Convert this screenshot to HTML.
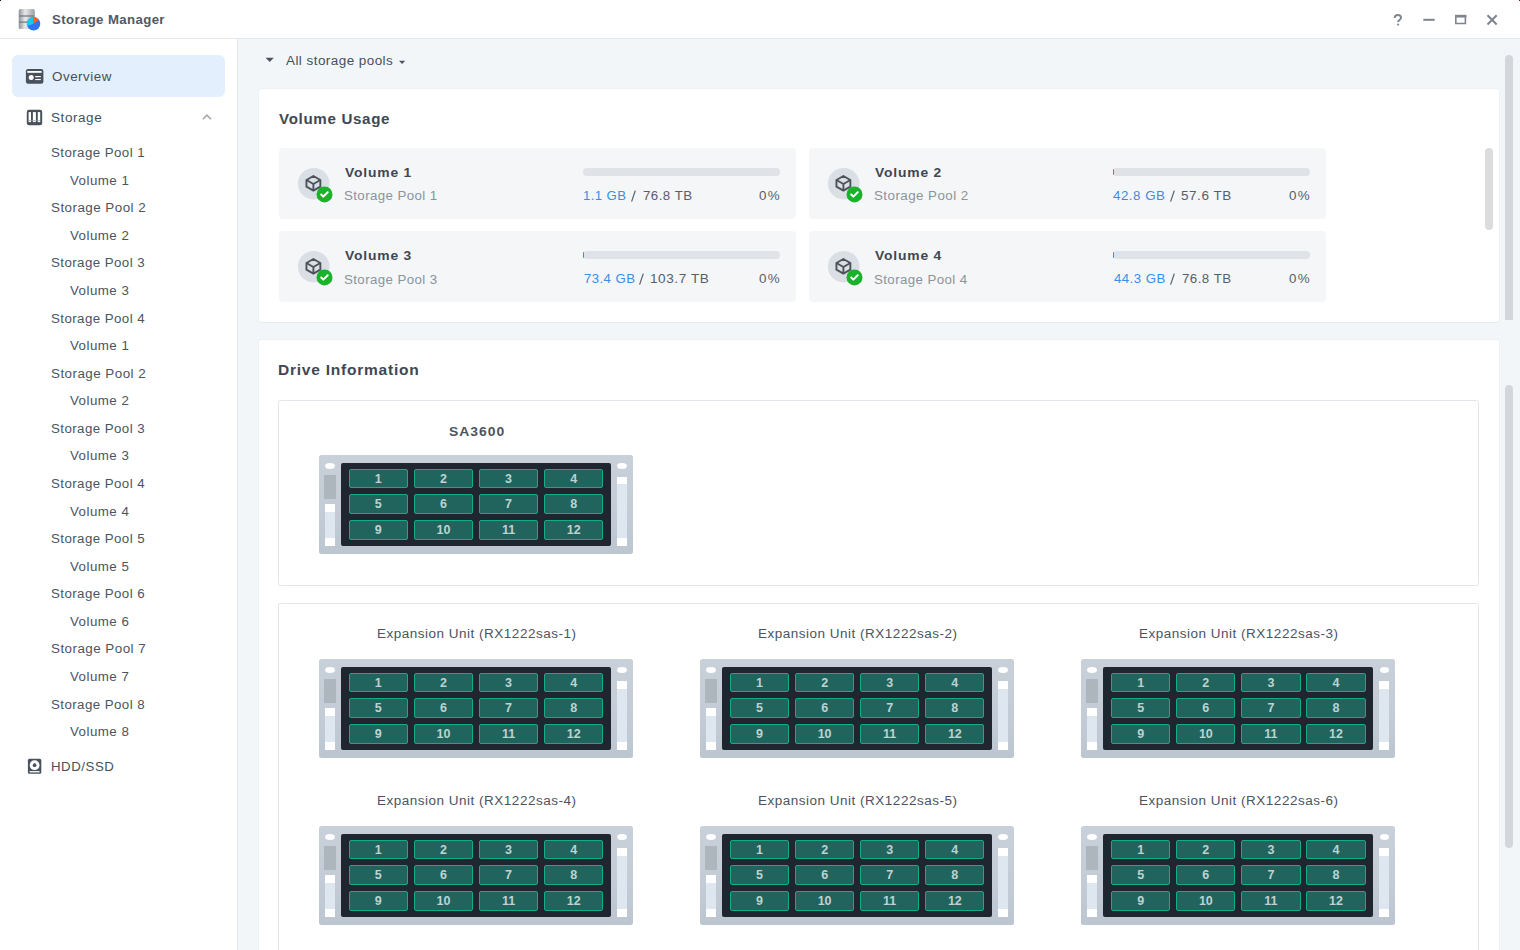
<!DOCTYPE html>
<html><head><meta charset="utf-8"><title>Storage Manager</title><style>
html,body{margin:0;padding:0}
body{width:1520px;height:950px;overflow:hidden;background:#f3f6f9;position:relative;font-family:"Liberation Sans",sans-serif}
.t{position:absolute;white-space:pre;line-height:1;transform-origin:0 0;font-family:"Liberation Sans",sans-serif}
</style></head><body>
<div style="position:absolute;left:0px;top:0px;width:1520px;height:38px;background:#fff"></div>
<div style="position:absolute;left:0px;top:38px;width:1520px;height:1px;background:#e4e8ec"></div>
<div style="position:absolute;left:0px;top:39px;width:237px;height:911px;background:#fff"></div>
<div style="position:absolute;left:237px;top:39px;width:1px;height:911px;background:#e3e7eb"></div>
<div style="position:absolute;left:12px;top:55px;width:213px;height:41.5px;background:#e3effc;border-radius:6px"></div>
<div style="position:absolute;left:0px;top:0px;width:1px;height:1px;background:#0a0a14"></div>
<div style="position:absolute;left:1519px;top:0px;width:1px;height:1px;background:#6a2020"></div>
<svg style="position:absolute;left:1385px;top:8px" width="125" height="24" viewBox="1385 8 125 24">
<g fill="none" stroke="#7d858e" stroke-width="2">
<path d="M1394.7 18.0c0-1.9 1.4-3.0 3.2-3.0s3.1 1.0 3.1 2.7c0 2.2-2.9 2.3-2.9 4.2" stroke-width="1.9"/>
<path d="M1423.3 19.8h11.4"/>
<path d="M1455.8 16.5h9.6v7h-9.6z" stroke-width="1.6"/>
<path d="M1487.5 15.3l9.2 9.2M1496.7 15.3l-9.2 9.2"/>
</g>
<rect x="1455" y="14.8" width="11.4" height="2.6" fill="#7d858e"/>
<circle cx="1398.1" cy="24.6" r="1.05" fill="#7d858e"/>
</svg>
<svg style="position:absolute;left:17px;top:8px" width="26" height="24" viewBox="0 0 26 24">
<defs><linearGradient id="cyl" x1="0" x2="1"><stop offset="0" stop-color="#8e9399"/><stop offset=".4" stop-color="#e8e9eb"/><stop offset="1" stop-color="#9a9fa5"/></linearGradient></defs>
<rect x="1.7" y="1.1" width="16.1" height="6.9" rx="1.6" fill="url(#cyl)"/>
<rect x="1.7" y="8.0" width="16.1" height="6.0" rx="1" fill="url(#cyl)"/>
<rect x="1.7" y="14.0" width="16.1" height="7.0" rx="1.6" fill="url(#cyl)"/>
<rect x="1.7" y="7.4" width="16.1" height="1.2" fill="#6f757b"/>
<rect x="1.7" y="13.5" width="16.1" height="1.2" fill="#6f757b"/>
<circle cx="16.6" cy="15.8" r="6.7" fill="#2f74f4"/>
<path d="M16.6 15.8 L10.3 18.0 A6.7 6.7 0 0 1 16.0 9.1 Z" fill="#16cbe8"/>
<path d="M16.6 15.8 L16.0 9.1 A6.7 6.7 0 0 1 21.9 11.7 Z" fill="#f5671f"/>
</svg>
<svg style="position:absolute;left:24px;top:66px" width="24" height="64" viewBox="24 66 24 64">
<rect x="25.9" y="69" width="17.5" height="14.7" rx="2.2" fill="#48525c"/>
<rect x="27.3" y="71" width="14.3" height="1.8" fill="#fff"/>
<circle cx="31.2" cy="77.4" r="2.5" fill="#fff"/>
<rect x="35.2" y="76" width="5.6" height="1.2" fill="#fff"/>
<rect x="35.2" y="79" width="5.6" height="1.1" fill="#fff"/>
<rect x="26.8" y="109.8" width="15.4" height="15.4" rx="2.2" fill="#48525c"/>
<rect x="28.6" y="112.1" width="2.4" height="10" fill="#fff"/>
<rect x="32.9" y="112.1" width="3.0" height="10" fill="#fff"/>
<rect x="37.8" y="112.1" width="2.4" height="10" fill="#fff"/>
<rect x="28.6" y="120.3" width="11.6" height="0.6" fill="#9aa1a8"/>
</svg>
<svg style="position:absolute;left:24px;top:756px" width="22" height="22" viewBox="24 756 22 22">
<rect x="27.9" y="758.7" width="13.4" height="15" rx="1.5" fill="#48525c"/>
<circle cx="34.6" cy="765.2" r="4.9" fill="#fff"/>
<circle cx="34.6" cy="765.2" r="1.85" fill="#48525c"/>
<rect x="29.6" y="771.1" width="10" height="1.3" fill="#fff"/>
</svg>
<svg style="position:absolute;left:198px;top:110px" width="18" height="14" viewBox="198 110 18 14">
<path d="M202.9 119.2 L206.95 115.1 L211 119.2" fill="none" stroke="#9ea5ad" stroke-width="1.5"/>
</svg>
<svg style="position:absolute;left:262px;top:54px" width="150" height="14" viewBox="262 54 150 14">
<path d="M265.6 57.8h8.2l-4.1 4.1z" fill="#4a535d"/>
<path d="M399.0 60.8h6.2l-3.1 3.1z" fill="#4a535d"/>
</svg>
<div style="position:absolute;left:259px;top:88.5px;width:1240px;height:233.5px;background:#fff;border-radius:2.5px;box-shadow:0 1px 0 #e7ebef,0 0 0 1px #eef1f4"></div>
<div style="position:absolute;left:278.5px;top:148px;width:517px;height:70.5px;background:#f5f6f8;border-radius:4px"></div>
<svg style="position:absolute;left:292.5px;top:162px" width="44" height="44" viewBox="292.5 162 44 44">
<circle cx="313.2" cy="183.7" r="15.8" fill="#dadfe6"/>
<g fill="none" stroke="#4b525a" stroke-width="1.9" stroke-linejoin="round">
<path d="M312.9 175.95 L319.84999999999997 179.95 L319.84999999999997 186.64999999999998 L312.9 190.64999999999998 L305.95 186.64999999999998 L305.95 179.95 Z"/>
<path d="M305.95 179.95 L312.9 183.95 L319.84999999999997 179.95 M312.9 183.95 L312.9 190.64999999999998"/>
</g>
<circle cx="324.0" cy="194.39999999999998" r="8.0" fill="#19b22a"/>
<path d="M320.7 194.5 L322.8 196.6 L327.2 192.2" fill="none" stroke="#fff" stroke-width="2.0" stroke-linecap="round" stroke-linejoin="round"/>
</svg>
<div style="position:absolute;left:583.0px;top:168px;width:197px;height:7.5px;background:#dfe2e6;border-radius:4px"></div>
<svg style="position:absolute;left:629.7px;top:189px" width="8" height="14" viewBox="0 0 8 14"><path d="M5.3 1.6 L1.6 12.6" stroke="#5a636c" stroke-width="1.25" fill="none"/></svg>
<div style="position:absolute;left:808.6px;top:148px;width:517px;height:70.5px;background:#f5f6f8;border-radius:4px"></div>
<svg style="position:absolute;left:822.6px;top:162px" width="44" height="44" viewBox="822.6 162 44 44">
<circle cx="843.3000000000001" cy="183.7" r="15.8" fill="#dadfe6"/>
<g fill="none" stroke="#4b525a" stroke-width="1.9" stroke-linejoin="round">
<path d="M843.0000000000001 175.95 L849.95 179.95 L849.95 186.64999999999998 L843.0000000000001 190.64999999999998 L836.0500000000001 186.64999999999998 L836.0500000000001 179.95 Z"/>
<path d="M836.0500000000001 179.95 L843.0000000000001 183.95 L849.95 179.95 M843.0000000000001 183.95 L843.0000000000001 190.64999999999998"/>
</g>
<circle cx="854.1" cy="194.39999999999998" r="8.0" fill="#19b22a"/>
<path d="M850.8000000000001 194.5 L852.9000000000001 196.6 L857.3000000000001 192.2" fill="none" stroke="#fff" stroke-width="2.0" stroke-linecap="round" stroke-linejoin="round"/>
</svg>
<div style="position:absolute;left:1113.1px;top:168px;width:197px;height:7.5px;background:#dfe2e6;border-radius:4px"></div>
<div style="position:absolute;left:1112.9px;top:168.6px;width:1.5px;height:6.3px;background:#3a8ae8;border-radius:1px 0 0 1px"></div>
<svg style="position:absolute;left:1168.5px;top:189px" width="8" height="14" viewBox="0 0 8 14"><path d="M5.3 1.6 L1.6 12.6" stroke="#5a636c" stroke-width="1.25" fill="none"/></svg>
<div style="position:absolute;left:278.5px;top:231.4px;width:517px;height:70.5px;background:#f5f6f8;border-radius:4px"></div>
<svg style="position:absolute;left:292.5px;top:245.4px" width="44" height="44" viewBox="292.5 245.4 44 44">
<circle cx="313.2" cy="267.1" r="15.8" fill="#dadfe6"/>
<g fill="none" stroke="#4b525a" stroke-width="1.9" stroke-linejoin="round">
<path d="M312.9 259.35 L319.84999999999997 263.35 L319.84999999999997 270.05 L312.9 274.05 L305.95 270.05 L305.95 263.35 Z"/>
<path d="M305.95 263.35 L312.9 267.35 L319.84999999999997 263.35 M312.9 267.35 L312.9 274.05"/>
</g>
<circle cx="324.0" cy="277.8" r="8.0" fill="#19b22a"/>
<path d="M320.7 277.90000000000003 L322.8 280.0 L327.2 275.6" fill="none" stroke="#fff" stroke-width="2.0" stroke-linecap="round" stroke-linejoin="round"/>
</svg>
<div style="position:absolute;left:583.0px;top:251.4px;width:197px;height:7.5px;background:#dfe2e6;border-radius:4px"></div>
<div style="position:absolute;left:582.8px;top:252.0px;width:1.5px;height:6.3px;background:#3a8ae8;border-radius:1px 0 0 1px"></div>
<svg style="position:absolute;left:638.4px;top:272.4px" width="8" height="14" viewBox="0 0 8 14"><path d="M5.3 1.6 L1.6 12.6" stroke="#5a636c" stroke-width="1.25" fill="none"/></svg>
<div style="position:absolute;left:808.6px;top:231.4px;width:517px;height:70.5px;background:#f5f6f8;border-radius:4px"></div>
<svg style="position:absolute;left:822.6px;top:245.4px" width="44" height="44" viewBox="822.6 245.4 44 44">
<circle cx="843.3000000000001" cy="267.1" r="15.8" fill="#dadfe6"/>
<g fill="none" stroke="#4b525a" stroke-width="1.9" stroke-linejoin="round">
<path d="M843.0000000000001 259.35 L849.95 263.35 L849.95 270.05 L843.0000000000001 274.05 L836.0500000000001 270.05 L836.0500000000001 263.35 Z"/>
<path d="M836.0500000000001 263.35 L843.0000000000001 267.35 L849.95 263.35 M843.0000000000001 267.35 L843.0000000000001 274.05"/>
</g>
<circle cx="854.1" cy="277.8" r="8.0" fill="#19b22a"/>
<path d="M850.8000000000001 277.90000000000003 L852.9000000000001 280.0 L857.3000000000001 275.6" fill="none" stroke="#fff" stroke-width="2.0" stroke-linecap="round" stroke-linejoin="round"/>
</svg>
<div style="position:absolute;left:1113.1px;top:251.4px;width:197px;height:7.5px;background:#dfe2e6;border-radius:4px"></div>
<div style="position:absolute;left:1112.9px;top:252.0px;width:1.5px;height:6.3px;background:#3a8ae8;border-radius:1px 0 0 1px"></div>
<svg style="position:absolute;left:1169.1px;top:272.4px" width="8" height="14" viewBox="0 0 8 14"><path d="M5.3 1.6 L1.6 12.6" stroke="#5a636c" stroke-width="1.25" fill="none"/></svg>
<div style="position:absolute;left:1485.2px;top:148.3px;width:8.2px;height:82px;background:#dcdcdc;border-radius:4px"></div>
<div style="position:absolute;left:259px;top:339.5px;width:1240px;height:620px;background:#fff;border-radius:2.5px;box-shadow:0 1px 0 #e7ebef,0 0 0 1px #eef1f4"></div>
<div style="position:absolute;left:278.3px;top:399.5px;width:1200.7px;height:186.7px;border:1px solid #e2e6eb;border-radius:2.5px;box-sizing:border-box"></div>
<div style="position:absolute;left:278.3px;top:602.7px;width:1200.7px;height:400px;border:1px solid #e2e6eb;border-radius:2.5px;box-sizing:border-box"></div>
<div style="position:absolute;left:319px;top:455px;width:314px;height:98.5px;background:linear-gradient(#c8d0d9,#c3ccd6 60%,#bcc6d0);border-radius:2.5px"><div style="position:absolute;left:5.7px;top:8px;width:10.1px;height:6px;background:#fff;border-radius:50%"></div><div style="position:absolute;left:5.1px;top:20px;width:11.6px;height:23.6px;background:#adb5bd"></div><div style="position:absolute;left:5.8px;top:49.4px;width:10.1px;height:41.7px;background:linear-gradient(#fff 0,#fff 8.1px,#dee7f0 8.1px,#dee7f0 33.6px,#fff 33.6px)"></div><div style="position:absolute;left:298.2px;top:8.3px;width:9.6px;height:5.8px;background:#fff;border-radius:50%"></div><div style="position:absolute;left:298.1px;top:22.2px;width:9.8px;height:68.9px;background:linear-gradient(#fff 0,#fff 7.5px,#dee7f0 7.5px,#dee7f0 60.8px,#fff 60.8px)"></div><div style="position:absolute;left:21.8px;top:8px;width:270px;height:82.7px;background:#1f2630;border-radius:2px"></div><div style="position:absolute;left:29.6px;top:13.6px;width:59.3px;height:19.8px;box-sizing:border-box;border:1.3px solid #12ad87;border-radius:2px;background:#21645e;color:#bdd3cf;font:700 12.5px/18.6px 'Liberation Sans',sans-serif;text-align:center">1</div><div style="position:absolute;left:94.8px;top:13.6px;width:59.3px;height:19.8px;box-sizing:border-box;border:1.3px solid #12ad87;border-radius:2px;background:#21645e;color:#bdd3cf;font:700 12.5px/18.6px 'Liberation Sans',sans-serif;text-align:center">2</div><div style="position:absolute;left:159.9px;top:13.6px;width:59.3px;height:19.8px;box-sizing:border-box;border:1.3px solid #12ad87;border-radius:2px;background:#21645e;color:#bdd3cf;font:700 12.5px/18.6px 'Liberation Sans',sans-serif;text-align:center">3</div><div style="position:absolute;left:225.0px;top:13.6px;width:59.3px;height:19.8px;box-sizing:border-box;border:1.3px solid #12ad87;border-radius:2px;background:#21645e;color:#bdd3cf;font:700 12.5px/18.6px 'Liberation Sans',sans-serif;text-align:center">4</div><div style="position:absolute;left:29.6px;top:39.4px;width:59.3px;height:19.8px;box-sizing:border-box;border:1.3px solid #12ad87;border-radius:2px;background:#21645e;color:#bdd3cf;font:700 12.5px/18.6px 'Liberation Sans',sans-serif;text-align:center">5</div><div style="position:absolute;left:94.8px;top:39.4px;width:59.3px;height:19.8px;box-sizing:border-box;border:1.3px solid #12ad87;border-radius:2px;background:#21645e;color:#bdd3cf;font:700 12.5px/18.6px 'Liberation Sans',sans-serif;text-align:center">6</div><div style="position:absolute;left:159.9px;top:39.4px;width:59.3px;height:19.8px;box-sizing:border-box;border:1.3px solid #12ad87;border-radius:2px;background:#21645e;color:#bdd3cf;font:700 12.5px/18.6px 'Liberation Sans',sans-serif;text-align:center">7</div><div style="position:absolute;left:225.0px;top:39.4px;width:59.3px;height:19.8px;box-sizing:border-box;border:1.3px solid #12ad87;border-radius:2px;background:#21645e;color:#bdd3cf;font:700 12.5px/18.6px 'Liberation Sans',sans-serif;text-align:center">8</div><div style="position:absolute;left:29.6px;top:65.0px;width:59.3px;height:19.8px;box-sizing:border-box;border:1.3px solid #12ad87;border-radius:2px;background:#21645e;color:#bdd3cf;font:700 12.5px/18.6px 'Liberation Sans',sans-serif;text-align:center">9</div><div style="position:absolute;left:94.8px;top:65.0px;width:59.3px;height:19.8px;box-sizing:border-box;border:1.3px solid #12ad87;border-radius:2px;background:#21645e;color:#bdd3cf;font:700 12.5px/18.6px 'Liberation Sans',sans-serif;text-align:center">10</div><div style="position:absolute;left:159.9px;top:65.0px;width:59.3px;height:19.8px;box-sizing:border-box;border:1.3px solid #12ad87;border-radius:2px;background:#21645e;color:#bdd3cf;font:700 12.5px/18.6px 'Liberation Sans',sans-serif;text-align:center">11</div><div style="position:absolute;left:225.0px;top:65.0px;width:59.3px;height:19.8px;box-sizing:border-box;border:1.3px solid #12ad87;border-radius:2px;background:#21645e;color:#bdd3cf;font:700 12.5px/18.6px 'Liberation Sans',sans-serif;text-align:center">12</div></div>
<div style="position:absolute;left:319.0px;top:659px;width:314px;height:98.5px;background:linear-gradient(#c8d0d9,#c3ccd6 60%,#bcc6d0);border-radius:2.5px"><div style="position:absolute;left:5.7px;top:8px;width:10.1px;height:6px;background:#fff;border-radius:50%"></div><div style="position:absolute;left:5.1px;top:20px;width:11.6px;height:23.6px;background:#adb5bd"></div><div style="position:absolute;left:5.8px;top:49.4px;width:10.1px;height:41.7px;background:linear-gradient(#fff 0,#fff 8.1px,#dee7f0 8.1px,#dee7f0 33.6px,#fff 33.6px)"></div><div style="position:absolute;left:298.2px;top:8.3px;width:9.6px;height:5.8px;background:#fff;border-radius:50%"></div><div style="position:absolute;left:298.1px;top:22.2px;width:9.8px;height:68.9px;background:linear-gradient(#fff 0,#fff 7.5px,#dee7f0 7.5px,#dee7f0 60.8px,#fff 60.8px)"></div><div style="position:absolute;left:21.8px;top:8px;width:270px;height:82.7px;background:#1f2630;border-radius:2px"></div><div style="position:absolute;left:29.6px;top:13.6px;width:59.3px;height:19.8px;box-sizing:border-box;border:1.3px solid #12ad87;border-radius:2px;background:#21645e;color:#bdd3cf;font:700 12.5px/18.6px 'Liberation Sans',sans-serif;text-align:center">1</div><div style="position:absolute;left:94.8px;top:13.6px;width:59.3px;height:19.8px;box-sizing:border-box;border:1.3px solid #12ad87;border-radius:2px;background:#21645e;color:#bdd3cf;font:700 12.5px/18.6px 'Liberation Sans',sans-serif;text-align:center">2</div><div style="position:absolute;left:159.9px;top:13.6px;width:59.3px;height:19.8px;box-sizing:border-box;border:1.3px solid #12ad87;border-radius:2px;background:#21645e;color:#bdd3cf;font:700 12.5px/18.6px 'Liberation Sans',sans-serif;text-align:center">3</div><div style="position:absolute;left:225.0px;top:13.6px;width:59.3px;height:19.8px;box-sizing:border-box;border:1.3px solid #12ad87;border-radius:2px;background:#21645e;color:#bdd3cf;font:700 12.5px/18.6px 'Liberation Sans',sans-serif;text-align:center">4</div><div style="position:absolute;left:29.6px;top:39.4px;width:59.3px;height:19.8px;box-sizing:border-box;border:1.3px solid #12ad87;border-radius:2px;background:#21645e;color:#bdd3cf;font:700 12.5px/18.6px 'Liberation Sans',sans-serif;text-align:center">5</div><div style="position:absolute;left:94.8px;top:39.4px;width:59.3px;height:19.8px;box-sizing:border-box;border:1.3px solid #12ad87;border-radius:2px;background:#21645e;color:#bdd3cf;font:700 12.5px/18.6px 'Liberation Sans',sans-serif;text-align:center">6</div><div style="position:absolute;left:159.9px;top:39.4px;width:59.3px;height:19.8px;box-sizing:border-box;border:1.3px solid #12ad87;border-radius:2px;background:#21645e;color:#bdd3cf;font:700 12.5px/18.6px 'Liberation Sans',sans-serif;text-align:center">7</div><div style="position:absolute;left:225.0px;top:39.4px;width:59.3px;height:19.8px;box-sizing:border-box;border:1.3px solid #12ad87;border-radius:2px;background:#21645e;color:#bdd3cf;font:700 12.5px/18.6px 'Liberation Sans',sans-serif;text-align:center">8</div><div style="position:absolute;left:29.6px;top:65.0px;width:59.3px;height:19.8px;box-sizing:border-box;border:1.3px solid #12ad87;border-radius:2px;background:#21645e;color:#bdd3cf;font:700 12.5px/18.6px 'Liberation Sans',sans-serif;text-align:center">9</div><div style="position:absolute;left:94.8px;top:65.0px;width:59.3px;height:19.8px;box-sizing:border-box;border:1.3px solid #12ad87;border-radius:2px;background:#21645e;color:#bdd3cf;font:700 12.5px/18.6px 'Liberation Sans',sans-serif;text-align:center">10</div><div style="position:absolute;left:159.9px;top:65.0px;width:59.3px;height:19.8px;box-sizing:border-box;border:1.3px solid #12ad87;border-radius:2px;background:#21645e;color:#bdd3cf;font:700 12.5px/18.6px 'Liberation Sans',sans-serif;text-align:center">11</div><div style="position:absolute;left:225.0px;top:65.0px;width:59.3px;height:19.8px;box-sizing:border-box;border:1.3px solid #12ad87;border-radius:2px;background:#21645e;color:#bdd3cf;font:700 12.5px/18.6px 'Liberation Sans',sans-serif;text-align:center">12</div></div>
<div style="position:absolute;left:700.2px;top:659px;width:314px;height:98.5px;background:linear-gradient(#c8d0d9,#c3ccd6 60%,#bcc6d0);border-radius:2.5px"><div style="position:absolute;left:5.7px;top:8px;width:10.1px;height:6px;background:#fff;border-radius:50%"></div><div style="position:absolute;left:5.1px;top:20px;width:11.6px;height:23.6px;background:#adb5bd"></div><div style="position:absolute;left:5.8px;top:49.4px;width:10.1px;height:41.7px;background:linear-gradient(#fff 0,#fff 8.1px,#dee7f0 8.1px,#dee7f0 33.6px,#fff 33.6px)"></div><div style="position:absolute;left:298.2px;top:8.3px;width:9.6px;height:5.8px;background:#fff;border-radius:50%"></div><div style="position:absolute;left:298.1px;top:22.2px;width:9.8px;height:68.9px;background:linear-gradient(#fff 0,#fff 7.5px,#dee7f0 7.5px,#dee7f0 60.8px,#fff 60.8px)"></div><div style="position:absolute;left:21.8px;top:8px;width:270px;height:82.7px;background:#1f2630;border-radius:2px"></div><div style="position:absolute;left:29.6px;top:13.6px;width:59.3px;height:19.8px;box-sizing:border-box;border:1.3px solid #12ad87;border-radius:2px;background:#21645e;color:#bdd3cf;font:700 12.5px/18.6px 'Liberation Sans',sans-serif;text-align:center">1</div><div style="position:absolute;left:94.8px;top:13.6px;width:59.3px;height:19.8px;box-sizing:border-box;border:1.3px solid #12ad87;border-radius:2px;background:#21645e;color:#bdd3cf;font:700 12.5px/18.6px 'Liberation Sans',sans-serif;text-align:center">2</div><div style="position:absolute;left:159.9px;top:13.6px;width:59.3px;height:19.8px;box-sizing:border-box;border:1.3px solid #12ad87;border-radius:2px;background:#21645e;color:#bdd3cf;font:700 12.5px/18.6px 'Liberation Sans',sans-serif;text-align:center">3</div><div style="position:absolute;left:225.0px;top:13.6px;width:59.3px;height:19.8px;box-sizing:border-box;border:1.3px solid #12ad87;border-radius:2px;background:#21645e;color:#bdd3cf;font:700 12.5px/18.6px 'Liberation Sans',sans-serif;text-align:center">4</div><div style="position:absolute;left:29.6px;top:39.4px;width:59.3px;height:19.8px;box-sizing:border-box;border:1.3px solid #12ad87;border-radius:2px;background:#21645e;color:#bdd3cf;font:700 12.5px/18.6px 'Liberation Sans',sans-serif;text-align:center">5</div><div style="position:absolute;left:94.8px;top:39.4px;width:59.3px;height:19.8px;box-sizing:border-box;border:1.3px solid #12ad87;border-radius:2px;background:#21645e;color:#bdd3cf;font:700 12.5px/18.6px 'Liberation Sans',sans-serif;text-align:center">6</div><div style="position:absolute;left:159.9px;top:39.4px;width:59.3px;height:19.8px;box-sizing:border-box;border:1.3px solid #12ad87;border-radius:2px;background:#21645e;color:#bdd3cf;font:700 12.5px/18.6px 'Liberation Sans',sans-serif;text-align:center">7</div><div style="position:absolute;left:225.0px;top:39.4px;width:59.3px;height:19.8px;box-sizing:border-box;border:1.3px solid #12ad87;border-radius:2px;background:#21645e;color:#bdd3cf;font:700 12.5px/18.6px 'Liberation Sans',sans-serif;text-align:center">8</div><div style="position:absolute;left:29.6px;top:65.0px;width:59.3px;height:19.8px;box-sizing:border-box;border:1.3px solid #12ad87;border-radius:2px;background:#21645e;color:#bdd3cf;font:700 12.5px/18.6px 'Liberation Sans',sans-serif;text-align:center">9</div><div style="position:absolute;left:94.8px;top:65.0px;width:59.3px;height:19.8px;box-sizing:border-box;border:1.3px solid #12ad87;border-radius:2px;background:#21645e;color:#bdd3cf;font:700 12.5px/18.6px 'Liberation Sans',sans-serif;text-align:center">10</div><div style="position:absolute;left:159.9px;top:65.0px;width:59.3px;height:19.8px;box-sizing:border-box;border:1.3px solid #12ad87;border-radius:2px;background:#21645e;color:#bdd3cf;font:700 12.5px/18.6px 'Liberation Sans',sans-serif;text-align:center">11</div><div style="position:absolute;left:225.0px;top:65.0px;width:59.3px;height:19.8px;box-sizing:border-box;border:1.3px solid #12ad87;border-radius:2px;background:#21645e;color:#bdd3cf;font:700 12.5px/18.6px 'Liberation Sans',sans-serif;text-align:center">12</div></div>
<div style="position:absolute;left:1081.4px;top:659px;width:314px;height:98.5px;background:linear-gradient(#c8d0d9,#c3ccd6 60%,#bcc6d0);border-radius:2.5px"><div style="position:absolute;left:5.7px;top:8px;width:10.1px;height:6px;background:#fff;border-radius:50%"></div><div style="position:absolute;left:5.1px;top:20px;width:11.6px;height:23.6px;background:#adb5bd"></div><div style="position:absolute;left:5.8px;top:49.4px;width:10.1px;height:41.7px;background:linear-gradient(#fff 0,#fff 8.1px,#dee7f0 8.1px,#dee7f0 33.6px,#fff 33.6px)"></div><div style="position:absolute;left:298.2px;top:8.3px;width:9.6px;height:5.8px;background:#fff;border-radius:50%"></div><div style="position:absolute;left:298.1px;top:22.2px;width:9.8px;height:68.9px;background:linear-gradient(#fff 0,#fff 7.5px,#dee7f0 7.5px,#dee7f0 60.8px,#fff 60.8px)"></div><div style="position:absolute;left:21.8px;top:8px;width:270px;height:82.7px;background:#1f2630;border-radius:2px"></div><div style="position:absolute;left:29.6px;top:13.6px;width:59.3px;height:19.8px;box-sizing:border-box;border:1.3px solid #12ad87;border-radius:2px;background:#21645e;color:#bdd3cf;font:700 12.5px/18.6px 'Liberation Sans',sans-serif;text-align:center">1</div><div style="position:absolute;left:94.8px;top:13.6px;width:59.3px;height:19.8px;box-sizing:border-box;border:1.3px solid #12ad87;border-radius:2px;background:#21645e;color:#bdd3cf;font:700 12.5px/18.6px 'Liberation Sans',sans-serif;text-align:center">2</div><div style="position:absolute;left:159.9px;top:13.6px;width:59.3px;height:19.8px;box-sizing:border-box;border:1.3px solid #12ad87;border-radius:2px;background:#21645e;color:#bdd3cf;font:700 12.5px/18.6px 'Liberation Sans',sans-serif;text-align:center">3</div><div style="position:absolute;left:225.0px;top:13.6px;width:59.3px;height:19.8px;box-sizing:border-box;border:1.3px solid #12ad87;border-radius:2px;background:#21645e;color:#bdd3cf;font:700 12.5px/18.6px 'Liberation Sans',sans-serif;text-align:center">4</div><div style="position:absolute;left:29.6px;top:39.4px;width:59.3px;height:19.8px;box-sizing:border-box;border:1.3px solid #12ad87;border-radius:2px;background:#21645e;color:#bdd3cf;font:700 12.5px/18.6px 'Liberation Sans',sans-serif;text-align:center">5</div><div style="position:absolute;left:94.8px;top:39.4px;width:59.3px;height:19.8px;box-sizing:border-box;border:1.3px solid #12ad87;border-radius:2px;background:#21645e;color:#bdd3cf;font:700 12.5px/18.6px 'Liberation Sans',sans-serif;text-align:center">6</div><div style="position:absolute;left:159.9px;top:39.4px;width:59.3px;height:19.8px;box-sizing:border-box;border:1.3px solid #12ad87;border-radius:2px;background:#21645e;color:#bdd3cf;font:700 12.5px/18.6px 'Liberation Sans',sans-serif;text-align:center">7</div><div style="position:absolute;left:225.0px;top:39.4px;width:59.3px;height:19.8px;box-sizing:border-box;border:1.3px solid #12ad87;border-radius:2px;background:#21645e;color:#bdd3cf;font:700 12.5px/18.6px 'Liberation Sans',sans-serif;text-align:center">8</div><div style="position:absolute;left:29.6px;top:65.0px;width:59.3px;height:19.8px;box-sizing:border-box;border:1.3px solid #12ad87;border-radius:2px;background:#21645e;color:#bdd3cf;font:700 12.5px/18.6px 'Liberation Sans',sans-serif;text-align:center">9</div><div style="position:absolute;left:94.8px;top:65.0px;width:59.3px;height:19.8px;box-sizing:border-box;border:1.3px solid #12ad87;border-radius:2px;background:#21645e;color:#bdd3cf;font:700 12.5px/18.6px 'Liberation Sans',sans-serif;text-align:center">10</div><div style="position:absolute;left:159.9px;top:65.0px;width:59.3px;height:19.8px;box-sizing:border-box;border:1.3px solid #12ad87;border-radius:2px;background:#21645e;color:#bdd3cf;font:700 12.5px/18.6px 'Liberation Sans',sans-serif;text-align:center">11</div><div style="position:absolute;left:225.0px;top:65.0px;width:59.3px;height:19.8px;box-sizing:border-box;border:1.3px solid #12ad87;border-radius:2px;background:#21645e;color:#bdd3cf;font:700 12.5px/18.6px 'Liberation Sans',sans-serif;text-align:center">12</div></div>
<div style="position:absolute;left:319.0px;top:826px;width:314px;height:98.5px;background:linear-gradient(#c8d0d9,#c3ccd6 60%,#bcc6d0);border-radius:2.5px"><div style="position:absolute;left:5.7px;top:8px;width:10.1px;height:6px;background:#fff;border-radius:50%"></div><div style="position:absolute;left:5.1px;top:20px;width:11.6px;height:23.6px;background:#adb5bd"></div><div style="position:absolute;left:5.8px;top:49.4px;width:10.1px;height:41.7px;background:linear-gradient(#fff 0,#fff 8.1px,#dee7f0 8.1px,#dee7f0 33.6px,#fff 33.6px)"></div><div style="position:absolute;left:298.2px;top:8.3px;width:9.6px;height:5.8px;background:#fff;border-radius:50%"></div><div style="position:absolute;left:298.1px;top:22.2px;width:9.8px;height:68.9px;background:linear-gradient(#fff 0,#fff 7.5px,#dee7f0 7.5px,#dee7f0 60.8px,#fff 60.8px)"></div><div style="position:absolute;left:21.8px;top:8px;width:270px;height:82.7px;background:#1f2630;border-radius:2px"></div><div style="position:absolute;left:29.6px;top:13.6px;width:59.3px;height:19.8px;box-sizing:border-box;border:1.3px solid #12ad87;border-radius:2px;background:#21645e;color:#bdd3cf;font:700 12.5px/18.6px 'Liberation Sans',sans-serif;text-align:center">1</div><div style="position:absolute;left:94.8px;top:13.6px;width:59.3px;height:19.8px;box-sizing:border-box;border:1.3px solid #12ad87;border-radius:2px;background:#21645e;color:#bdd3cf;font:700 12.5px/18.6px 'Liberation Sans',sans-serif;text-align:center">2</div><div style="position:absolute;left:159.9px;top:13.6px;width:59.3px;height:19.8px;box-sizing:border-box;border:1.3px solid #12ad87;border-radius:2px;background:#21645e;color:#bdd3cf;font:700 12.5px/18.6px 'Liberation Sans',sans-serif;text-align:center">3</div><div style="position:absolute;left:225.0px;top:13.6px;width:59.3px;height:19.8px;box-sizing:border-box;border:1.3px solid #12ad87;border-radius:2px;background:#21645e;color:#bdd3cf;font:700 12.5px/18.6px 'Liberation Sans',sans-serif;text-align:center">4</div><div style="position:absolute;left:29.6px;top:39.4px;width:59.3px;height:19.8px;box-sizing:border-box;border:1.3px solid #12ad87;border-radius:2px;background:#21645e;color:#bdd3cf;font:700 12.5px/18.6px 'Liberation Sans',sans-serif;text-align:center">5</div><div style="position:absolute;left:94.8px;top:39.4px;width:59.3px;height:19.8px;box-sizing:border-box;border:1.3px solid #12ad87;border-radius:2px;background:#21645e;color:#bdd3cf;font:700 12.5px/18.6px 'Liberation Sans',sans-serif;text-align:center">6</div><div style="position:absolute;left:159.9px;top:39.4px;width:59.3px;height:19.8px;box-sizing:border-box;border:1.3px solid #12ad87;border-radius:2px;background:#21645e;color:#bdd3cf;font:700 12.5px/18.6px 'Liberation Sans',sans-serif;text-align:center">7</div><div style="position:absolute;left:225.0px;top:39.4px;width:59.3px;height:19.8px;box-sizing:border-box;border:1.3px solid #12ad87;border-radius:2px;background:#21645e;color:#bdd3cf;font:700 12.5px/18.6px 'Liberation Sans',sans-serif;text-align:center">8</div><div style="position:absolute;left:29.6px;top:65.0px;width:59.3px;height:19.8px;box-sizing:border-box;border:1.3px solid #12ad87;border-radius:2px;background:#21645e;color:#bdd3cf;font:700 12.5px/18.6px 'Liberation Sans',sans-serif;text-align:center">9</div><div style="position:absolute;left:94.8px;top:65.0px;width:59.3px;height:19.8px;box-sizing:border-box;border:1.3px solid #12ad87;border-radius:2px;background:#21645e;color:#bdd3cf;font:700 12.5px/18.6px 'Liberation Sans',sans-serif;text-align:center">10</div><div style="position:absolute;left:159.9px;top:65.0px;width:59.3px;height:19.8px;box-sizing:border-box;border:1.3px solid #12ad87;border-radius:2px;background:#21645e;color:#bdd3cf;font:700 12.5px/18.6px 'Liberation Sans',sans-serif;text-align:center">11</div><div style="position:absolute;left:225.0px;top:65.0px;width:59.3px;height:19.8px;box-sizing:border-box;border:1.3px solid #12ad87;border-radius:2px;background:#21645e;color:#bdd3cf;font:700 12.5px/18.6px 'Liberation Sans',sans-serif;text-align:center">12</div></div>
<div style="position:absolute;left:700.2px;top:826px;width:314px;height:98.5px;background:linear-gradient(#c8d0d9,#c3ccd6 60%,#bcc6d0);border-radius:2.5px"><div style="position:absolute;left:5.7px;top:8px;width:10.1px;height:6px;background:#fff;border-radius:50%"></div><div style="position:absolute;left:5.1px;top:20px;width:11.6px;height:23.6px;background:#adb5bd"></div><div style="position:absolute;left:5.8px;top:49.4px;width:10.1px;height:41.7px;background:linear-gradient(#fff 0,#fff 8.1px,#dee7f0 8.1px,#dee7f0 33.6px,#fff 33.6px)"></div><div style="position:absolute;left:298.2px;top:8.3px;width:9.6px;height:5.8px;background:#fff;border-radius:50%"></div><div style="position:absolute;left:298.1px;top:22.2px;width:9.8px;height:68.9px;background:linear-gradient(#fff 0,#fff 7.5px,#dee7f0 7.5px,#dee7f0 60.8px,#fff 60.8px)"></div><div style="position:absolute;left:21.8px;top:8px;width:270px;height:82.7px;background:#1f2630;border-radius:2px"></div><div style="position:absolute;left:29.6px;top:13.6px;width:59.3px;height:19.8px;box-sizing:border-box;border:1.3px solid #12ad87;border-radius:2px;background:#21645e;color:#bdd3cf;font:700 12.5px/18.6px 'Liberation Sans',sans-serif;text-align:center">1</div><div style="position:absolute;left:94.8px;top:13.6px;width:59.3px;height:19.8px;box-sizing:border-box;border:1.3px solid #12ad87;border-radius:2px;background:#21645e;color:#bdd3cf;font:700 12.5px/18.6px 'Liberation Sans',sans-serif;text-align:center">2</div><div style="position:absolute;left:159.9px;top:13.6px;width:59.3px;height:19.8px;box-sizing:border-box;border:1.3px solid #12ad87;border-radius:2px;background:#21645e;color:#bdd3cf;font:700 12.5px/18.6px 'Liberation Sans',sans-serif;text-align:center">3</div><div style="position:absolute;left:225.0px;top:13.6px;width:59.3px;height:19.8px;box-sizing:border-box;border:1.3px solid #12ad87;border-radius:2px;background:#21645e;color:#bdd3cf;font:700 12.5px/18.6px 'Liberation Sans',sans-serif;text-align:center">4</div><div style="position:absolute;left:29.6px;top:39.4px;width:59.3px;height:19.8px;box-sizing:border-box;border:1.3px solid #12ad87;border-radius:2px;background:#21645e;color:#bdd3cf;font:700 12.5px/18.6px 'Liberation Sans',sans-serif;text-align:center">5</div><div style="position:absolute;left:94.8px;top:39.4px;width:59.3px;height:19.8px;box-sizing:border-box;border:1.3px solid #12ad87;border-radius:2px;background:#21645e;color:#bdd3cf;font:700 12.5px/18.6px 'Liberation Sans',sans-serif;text-align:center">6</div><div style="position:absolute;left:159.9px;top:39.4px;width:59.3px;height:19.8px;box-sizing:border-box;border:1.3px solid #12ad87;border-radius:2px;background:#21645e;color:#bdd3cf;font:700 12.5px/18.6px 'Liberation Sans',sans-serif;text-align:center">7</div><div style="position:absolute;left:225.0px;top:39.4px;width:59.3px;height:19.8px;box-sizing:border-box;border:1.3px solid #12ad87;border-radius:2px;background:#21645e;color:#bdd3cf;font:700 12.5px/18.6px 'Liberation Sans',sans-serif;text-align:center">8</div><div style="position:absolute;left:29.6px;top:65.0px;width:59.3px;height:19.8px;box-sizing:border-box;border:1.3px solid #12ad87;border-radius:2px;background:#21645e;color:#bdd3cf;font:700 12.5px/18.6px 'Liberation Sans',sans-serif;text-align:center">9</div><div style="position:absolute;left:94.8px;top:65.0px;width:59.3px;height:19.8px;box-sizing:border-box;border:1.3px solid #12ad87;border-radius:2px;background:#21645e;color:#bdd3cf;font:700 12.5px/18.6px 'Liberation Sans',sans-serif;text-align:center">10</div><div style="position:absolute;left:159.9px;top:65.0px;width:59.3px;height:19.8px;box-sizing:border-box;border:1.3px solid #12ad87;border-radius:2px;background:#21645e;color:#bdd3cf;font:700 12.5px/18.6px 'Liberation Sans',sans-serif;text-align:center">11</div><div style="position:absolute;left:225.0px;top:65.0px;width:59.3px;height:19.8px;box-sizing:border-box;border:1.3px solid #12ad87;border-radius:2px;background:#21645e;color:#bdd3cf;font:700 12.5px/18.6px 'Liberation Sans',sans-serif;text-align:center">12</div></div>
<div style="position:absolute;left:1081.4px;top:826px;width:314px;height:98.5px;background:linear-gradient(#c8d0d9,#c3ccd6 60%,#bcc6d0);border-radius:2.5px"><div style="position:absolute;left:5.7px;top:8px;width:10.1px;height:6px;background:#fff;border-radius:50%"></div><div style="position:absolute;left:5.1px;top:20px;width:11.6px;height:23.6px;background:#adb5bd"></div><div style="position:absolute;left:5.8px;top:49.4px;width:10.1px;height:41.7px;background:linear-gradient(#fff 0,#fff 8.1px,#dee7f0 8.1px,#dee7f0 33.6px,#fff 33.6px)"></div><div style="position:absolute;left:298.2px;top:8.3px;width:9.6px;height:5.8px;background:#fff;border-radius:50%"></div><div style="position:absolute;left:298.1px;top:22.2px;width:9.8px;height:68.9px;background:linear-gradient(#fff 0,#fff 7.5px,#dee7f0 7.5px,#dee7f0 60.8px,#fff 60.8px)"></div><div style="position:absolute;left:21.8px;top:8px;width:270px;height:82.7px;background:#1f2630;border-radius:2px"></div><div style="position:absolute;left:29.6px;top:13.6px;width:59.3px;height:19.8px;box-sizing:border-box;border:1.3px solid #12ad87;border-radius:2px;background:#21645e;color:#bdd3cf;font:700 12.5px/18.6px 'Liberation Sans',sans-serif;text-align:center">1</div><div style="position:absolute;left:94.8px;top:13.6px;width:59.3px;height:19.8px;box-sizing:border-box;border:1.3px solid #12ad87;border-radius:2px;background:#21645e;color:#bdd3cf;font:700 12.5px/18.6px 'Liberation Sans',sans-serif;text-align:center">2</div><div style="position:absolute;left:159.9px;top:13.6px;width:59.3px;height:19.8px;box-sizing:border-box;border:1.3px solid #12ad87;border-radius:2px;background:#21645e;color:#bdd3cf;font:700 12.5px/18.6px 'Liberation Sans',sans-serif;text-align:center">3</div><div style="position:absolute;left:225.0px;top:13.6px;width:59.3px;height:19.8px;box-sizing:border-box;border:1.3px solid #12ad87;border-radius:2px;background:#21645e;color:#bdd3cf;font:700 12.5px/18.6px 'Liberation Sans',sans-serif;text-align:center">4</div><div style="position:absolute;left:29.6px;top:39.4px;width:59.3px;height:19.8px;box-sizing:border-box;border:1.3px solid #12ad87;border-radius:2px;background:#21645e;color:#bdd3cf;font:700 12.5px/18.6px 'Liberation Sans',sans-serif;text-align:center">5</div><div style="position:absolute;left:94.8px;top:39.4px;width:59.3px;height:19.8px;box-sizing:border-box;border:1.3px solid #12ad87;border-radius:2px;background:#21645e;color:#bdd3cf;font:700 12.5px/18.6px 'Liberation Sans',sans-serif;text-align:center">6</div><div style="position:absolute;left:159.9px;top:39.4px;width:59.3px;height:19.8px;box-sizing:border-box;border:1.3px solid #12ad87;border-radius:2px;background:#21645e;color:#bdd3cf;font:700 12.5px/18.6px 'Liberation Sans',sans-serif;text-align:center">7</div><div style="position:absolute;left:225.0px;top:39.4px;width:59.3px;height:19.8px;box-sizing:border-box;border:1.3px solid #12ad87;border-radius:2px;background:#21645e;color:#bdd3cf;font:700 12.5px/18.6px 'Liberation Sans',sans-serif;text-align:center">8</div><div style="position:absolute;left:29.6px;top:65.0px;width:59.3px;height:19.8px;box-sizing:border-box;border:1.3px solid #12ad87;border-radius:2px;background:#21645e;color:#bdd3cf;font:700 12.5px/18.6px 'Liberation Sans',sans-serif;text-align:center">9</div><div style="position:absolute;left:94.8px;top:65.0px;width:59.3px;height:19.8px;box-sizing:border-box;border:1.3px solid #12ad87;border-radius:2px;background:#21645e;color:#bdd3cf;font:700 12.5px/18.6px 'Liberation Sans',sans-serif;text-align:center">10</div><div style="position:absolute;left:159.9px;top:65.0px;width:59.3px;height:19.8px;box-sizing:border-box;border:1.3px solid #12ad87;border-radius:2px;background:#21645e;color:#bdd3cf;font:700 12.5px/18.6px 'Liberation Sans',sans-serif;text-align:center">11</div><div style="position:absolute;left:225.0px;top:65.0px;width:59.3px;height:19.8px;box-sizing:border-box;border:1.3px solid #12ad87;border-radius:2px;background:#21645e;color:#bdd3cf;font:700 12.5px/18.6px 'Liberation Sans',sans-serif;text-align:center">12</div></div>
<div style="position:absolute;left:1505px;top:55px;width:8px;height:265px;background:#d3d7db;border-radius:4px 4px 0 0"></div>
<div style="position:absolute;left:1505px;top:385px;width:8px;height:462.5px;background:#d3d7db;border-radius:4px"></div>
<div class="t" style="left:51.60px;top:13.62px;font-size:12.5px;font-weight:700;color:#4f5965;letter-spacing:0.376px;transform:scaleX(1.0544)">Storage Manager</div>
<div class="t" style="left:51.70px;top:70.92px;font-size:12.5px;font-weight:400;color:#44505c;letter-spacing:0.487px;transform:scaleX(1.0702)">Overview</div>
<div class="t" style="left:50.62px;top:112.32px;font-size:12.5px;font-weight:400;color:#44505c;letter-spacing:0.525px;transform:scaleX(1.0791)">Storage</div>
<div class="t" style="left:50.53px;top:147.02px;font-size:12.5px;font-weight:400;color:#4a5560;letter-spacing:0.390px;transform:scaleX(1.0659)">Storage Pool 1</div>
<div class="t" style="left:69.90px;top:174.60px;font-size:12.5px;font-weight:400;color:#4a5560;letter-spacing:0.450px;transform:scaleX(1.0644)">Volume 1</div>
<div class="t" style="left:50.53px;top:202.18px;font-size:12.5px;font-weight:400;color:#4a5560;letter-spacing:0.423px;transform:scaleX(1.0728)">Storage Pool 2</div>
<div class="t" style="left:69.90px;top:229.76px;font-size:12.5px;font-weight:400;color:#4a5560;letter-spacing:0.450px;transform:scaleX(1.0644)">Volume 2</div>
<div class="t" style="left:50.53px;top:257.34px;font-size:12.5px;font-weight:400;color:#4a5560;letter-spacing:0.390px;transform:scaleX(1.0659)">Storage Pool 3</div>
<div class="t" style="left:69.90px;top:284.92px;font-size:12.5px;font-weight:400;color:#4a5560;letter-spacing:0.450px;transform:scaleX(1.0644)">Volume 3</div>
<div class="t" style="left:50.53px;top:312.50px;font-size:12.5px;font-weight:400;color:#4a5560;letter-spacing:0.390px;transform:scaleX(1.0659)">Storage Pool 4</div>
<div class="t" style="left:69.90px;top:340.08px;font-size:12.5px;font-weight:400;color:#4a5560;letter-spacing:0.450px;transform:scaleX(1.0644)">Volume 1</div>
<div class="t" style="left:50.53px;top:367.66px;font-size:12.5px;font-weight:400;color:#4a5560;letter-spacing:0.423px;transform:scaleX(1.0728)">Storage Pool 2</div>
<div class="t" style="left:69.90px;top:395.24px;font-size:12.5px;font-weight:400;color:#4a5560;letter-spacing:0.450px;transform:scaleX(1.0644)">Volume 2</div>
<div class="t" style="left:50.53px;top:422.82px;font-size:12.5px;font-weight:400;color:#4a5560;letter-spacing:0.390px;transform:scaleX(1.0659)">Storage Pool 3</div>
<div class="t" style="left:69.90px;top:450.40px;font-size:12.5px;font-weight:400;color:#4a5560;letter-spacing:0.450px;transform:scaleX(1.0644)">Volume 3</div>
<div class="t" style="left:50.53px;top:477.98px;font-size:12.5px;font-weight:400;color:#4a5560;letter-spacing:0.390px;transform:scaleX(1.0659)">Storage Pool 4</div>
<div class="t" style="left:69.90px;top:505.56px;font-size:12.5px;font-weight:400;color:#4a5560;letter-spacing:0.450px;transform:scaleX(1.0644)">Volume 4</div>
<div class="t" style="left:50.53px;top:533.14px;font-size:12.5px;font-weight:400;color:#4a5560;letter-spacing:0.390px;transform:scaleX(1.0659)">Storage Pool 5</div>
<div class="t" style="left:69.90px;top:560.72px;font-size:12.5px;font-weight:400;color:#4a5560;letter-spacing:0.450px;transform:scaleX(1.0644)">Volume 5</div>
<div class="t" style="left:50.53px;top:588.30px;font-size:12.5px;font-weight:400;color:#4a5560;letter-spacing:0.390px;transform:scaleX(1.0659)">Storage Pool 6</div>
<div class="t" style="left:69.90px;top:615.88px;font-size:12.5px;font-weight:400;color:#4a5560;letter-spacing:0.450px;transform:scaleX(1.0644)">Volume 6</div>
<div class="t" style="left:50.53px;top:643.46px;font-size:12.5px;font-weight:400;color:#4a5560;letter-spacing:0.423px;transform:scaleX(1.0728)">Storage Pool 7</div>
<div class="t" style="left:69.90px;top:671.04px;font-size:12.5px;font-weight:400;color:#4a5560;letter-spacing:0.450px;transform:scaleX(1.0644)">Volume 7</div>
<div class="t" style="left:50.53px;top:698.62px;font-size:12.5px;font-weight:400;color:#4a5560;letter-spacing:0.390px;transform:scaleX(1.0659)">Storage Pool 8</div>
<div class="t" style="left:69.90px;top:726.20px;font-size:12.5px;font-weight:400;color:#4a5560;letter-spacing:0.450px;transform:scaleX(1.0644)">Volume 8</div>
<div class="t" style="left:50.54px;top:760.92px;font-size:12.5px;font-weight:400;color:#44505c;letter-spacing:0.519px;transform:scaleX(1.0600)">HDD/SSD</div>
<div class="t" style="left:285.50px;top:54.72px;font-size:12.5px;font-weight:400;color:#44505c;letter-spacing:0.415px;transform:scaleX(1.0777)">All storage pools</div>
<div class="t" style="left:279.00px;top:112.05px;font-size:14px;font-weight:700;color:#3e4853;letter-spacing:0.632px;transform:scaleX(1.0789)">Volume Usage</div>
<div class="t" style="left:345.10px;top:166.62px;font-size:12.5px;font-weight:700;color:#3e4853;letter-spacing:0.755px;transform:scaleX(1.1064)">Volume 1</div>
<div class="t" style="left:344.04px;top:190.22px;font-size:12.5px;font-weight:400;color:#8b939b;letter-spacing:0.376px;transform:scaleX(1.0634)">Storage Pool 1</div>
<div class="t" style="left:583.35px;top:189.82px;font-size:12.5px;font-weight:400;color:#3a8ee6;letter-spacing:0.380px;transform:scaleX(1.0526)">1.1 GB</div>
<div class="t" style="left:643.00px;top:189.82px;font-size:12.5px;font-weight:400;color:#56606a;letter-spacing:0.431px;transform:scaleX(1.0640)">76.8 TB</div>
<div class="t" style="left:758.80px;top:189.82px;font-size:12.5px;font-weight:400;color:#56606a;letter-spacing:1.169px;transform:scaleX(1.0694)">0%</div>
<div class="t" style="left:875.20px;top:166.62px;font-size:12.5px;font-weight:700;color:#3e4853;letter-spacing:0.755px;transform:scaleX(1.1064)">Volume 2</div>
<div class="t" style="left:874.13px;top:190.22px;font-size:12.5px;font-weight:400;color:#8b939b;letter-spacing:0.410px;transform:scaleX(1.0704)">Storage Pool 2</div>
<div class="t" style="left:1113.40px;top:189.82px;font-size:12.5px;font-weight:400;color:#3a8ee6;letter-spacing:0.477px;transform:scaleX(1.0663)">42.8 GB</div>
<div class="t" style="left:1181.30px;top:189.82px;font-size:12.5px;font-weight:400;color:#56606a;letter-spacing:0.518px;transform:scaleX(1.0779)">57.6 TB</div>
<div class="t" style="left:1288.90px;top:189.82px;font-size:12.5px;font-weight:400;color:#56606a;letter-spacing:1.169px;transform:scaleX(1.0694)">0%</div>
<div class="t" style="left:345.10px;top:250.02px;font-size:12.5px;font-weight:700;color:#3e4853;letter-spacing:0.755px;transform:scaleX(1.1064)">Volume 3</div>
<div class="t" style="left:344.04px;top:273.62px;font-size:12.5px;font-weight:400;color:#8b939b;letter-spacing:0.376px;transform:scaleX(1.0634)">Storage Pool 3</div>
<div class="t" style="left:584.00px;top:273.22px;font-size:12.5px;font-weight:400;color:#3a8ee6;letter-spacing:0.403px;transform:scaleX(1.0554)">73.4 GB</div>
<div class="t" style="left:649.92px;top:273.22px;font-size:12.5px;font-weight:400;color:#56606a;letter-spacing:0.540px;transform:scaleX(1.0837)">103.7 TB</div>
<div class="t" style="left:758.80px;top:273.22px;font-size:12.5px;font-weight:400;color:#56606a;letter-spacing:1.169px;transform:scaleX(1.0694)">0%</div>
<div class="t" style="left:875.20px;top:250.02px;font-size:12.5px;font-weight:700;color:#3e4853;letter-spacing:0.755px;transform:scaleX(1.1064)">Volume 4</div>
<div class="t" style="left:874.14px;top:273.62px;font-size:12.5px;font-weight:400;color:#8b939b;letter-spacing:0.376px;transform:scaleX(1.0634)">Storage Pool 4</div>
<div class="t" style="left:1113.70px;top:273.22px;font-size:12.5px;font-weight:400;color:#3a8ee6;letter-spacing:0.425px;transform:scaleX(1.0587)">44.3 GB</div>
<div class="t" style="left:1181.70px;top:273.22px;font-size:12.5px;font-weight:400;color:#56606a;letter-spacing:0.431px;transform:scaleX(1.0640)">76.8 TB</div>
<div class="t" style="left:1288.90px;top:273.22px;font-size:12.5px;font-weight:400;color:#56606a;letter-spacing:1.169px;transform:scaleX(1.0694)">0%</div>
<div class="t" style="left:278.09px;top:362.85px;font-size:14px;font-weight:700;color:#3e4853;letter-spacing:0.694px;transform:scaleX(1.1079)">Drive Information</div>
<div class="t" style="left:448.70px;top:425.52px;font-size:12.5px;font-weight:700;color:#4a5462;letter-spacing:0.900px;transform:scaleX(1.1111)">SA3600</div>
<div class="t" style="left:376.52px;top:627.62px;font-size:12.5px;font-weight:400;color:#4a5462;letter-spacing:0.466px;transform:scaleX(1.0800)">Expansion Unit (RX1222sas-1)</div>
<div class="t" style="left:757.72px;top:627.62px;font-size:12.5px;font-weight:400;color:#4a5462;letter-spacing:0.466px;transform:scaleX(1.0800)">Expansion Unit (RX1222sas-2)</div>
<div class="t" style="left:1138.92px;top:627.62px;font-size:12.5px;font-weight:400;color:#4a5462;letter-spacing:0.466px;transform:scaleX(1.0800)">Expansion Unit (RX1222sas-3)</div>
<div class="t" style="left:376.52px;top:794.82px;font-size:12.5px;font-weight:400;color:#4a5462;letter-spacing:0.466px;transform:scaleX(1.0800)">Expansion Unit (RX1222sas-4)</div>
<div class="t" style="left:757.72px;top:794.82px;font-size:12.5px;font-weight:400;color:#4a5462;letter-spacing:0.466px;transform:scaleX(1.0800)">Expansion Unit (RX1222sas-5)</div>
<div class="t" style="left:1138.92px;top:794.82px;font-size:12.5px;font-weight:400;color:#4a5462;letter-spacing:0.466px;transform:scaleX(1.0800)">Expansion Unit (RX1222sas-6)</div>
</body></html>
